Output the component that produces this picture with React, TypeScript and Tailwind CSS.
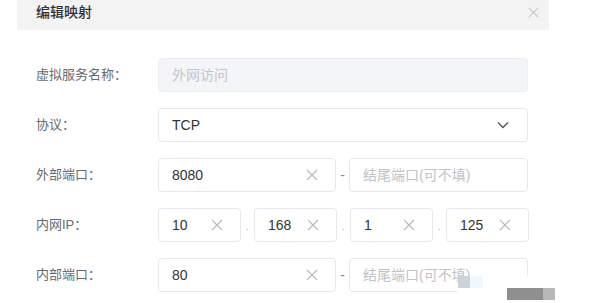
import React from "react";

const font = { fontFamily: '"Liberation Sans", "Noto Sans CJK SC", sans-serif' };

function XIcon({ size = 11, color = "#b4b8bf" }: { size?: number; color?: string }) {
  return (
    <svg width={size} height={size} viewBox="0 0 12 12" fill="none">
      <path d="M1 1L11 11M11 1L1 11" stroke={color} strokeWidth="1.1" />
    </svg>
  );
}

function ClearInput({ value, className }: { value: string; className: string }) {
  return (
    <div
      className={`h-[34px] rounded-[4px] border border-[#e6e8ec] bg-white flex items-center pl-[13px] pr-[17px] ${className}`}
    >
      <span className="flex-1 text-[14px] text-[#333]">{value}</span>
      <XIcon size={12} />
    </div>
  );
}

function PlaceholderInput({ text }: { text: string }) {
  return (
    <div className="h-[34px] w-[179px] rounded-[4px] border border-[#e6e8ec] bg-white flex items-center pl-[13px]">
      <span className="text-[14px] text-[#bfc3c9]">{text}</span>
    </div>
  );
}

function Label({ children }: { children: React.ReactNode }) {
  return <div className="w-[122px] text-[13px] text-[#666a70]">{children}</div>;
}

function Dot() {
  return <div className="w-[13px] h-[34px] flex items-end justify-center pb-[10px] text-[10px] text-[#aaa] leading-none">.</div>;
}

function Dash() {
  return <div className="w-[13px] flex items-center justify-center text-[14px] text-[#888]">-</div>;
}

export default function App() {
  return (
    <div className="relative w-[590px] h-[303px] bg-white overflow-hidden" style={font}>
      <div className="ml-[17px] w-[532px] h-[30px] bg-[#f3f3f3] flex items-center justify-between pl-[19px] pr-[10px]">
        <span className="text-[14px] font-medium text-[#333] pb-[5px]">编辑映射</span>
        <span className="pb-[6px]"><XIcon size={11} color="#c4c4c4" /></span>
      </div>

      <div className="pl-[36px] pt-[28px] flex flex-col gap-[16px]">
        <div className="flex items-center">
          <Label>虚拟服务名称：</Label>
          <div className="h-[34px] w-[370px] rounded-[4px] border border-[#eceef2] bg-[#f3f5f8] flex items-center pl-[13px]">
            <span className="text-[14px] text-[#c3c6cc]">外网访问</span>
          </div>
        </div>

        <div className="flex items-center">
          <Label>协议：</Label>
          <div className="h-[34px] w-[370px] rounded-[4px] border border-[#e6e8ec] bg-white flex items-center pl-[13px] pr-[18px]">
            <span className="flex-1 text-[14px] text-[#333]">TCP</span>
            <svg width="12" height="8" viewBox="0 0 12 8" fill="none">
              <path d="M1 1.5L6 6.5L11 1.5" stroke="#555" strokeWidth="1.4" />
            </svg>
          </div>
        </div>

        <div className="flex items-center">
          <Label>外部端口：</Label>
          <ClearInput value="8080" className="w-[178px]" />
          <Dash />
          <PlaceholderInput text="结尾端口(可不填)" />
        </div>

        <div className="flex items-center">
          <Label>内网IP：</Label>
          <ClearInput value="10" className="w-[83px]" />
          <Dot />
          <ClearInput value="168" className="w-[83px]" />
          <Dot />
          <ClearInput value="1" className="w-[83px]" />
          <Dot />
          <ClearInput value="125" className="w-[83px]" />
        </div>

        <div className="flex items-center">
          <Label>内部端口：</Label>
          <ClearInput value="80" className="w-[178px]" />
          <Dash />
          <PlaceholderInput text="结尾端口(可不填)" />
        </div>
      </div>

      <div className="absolute left-[458px] top-[276px] w-[132px] h-[27px] bg-white">
        <div className="flex">
          <div className="w-[12px] h-[12px] bg-[#cdd1d8]" />
          <div className="w-[13px] h-[12px] bg-[#f0f8fd]" />
        </div>
        <div className="flex ml-[49px]">
          <div className="w-[36px] h-[12px] bg-[#8f8f8f]" />
          <div className="w-[12px] h-[12px] bg-[#b8b8b8]" />
        </div>
      </div>
    </div>
  );
}
